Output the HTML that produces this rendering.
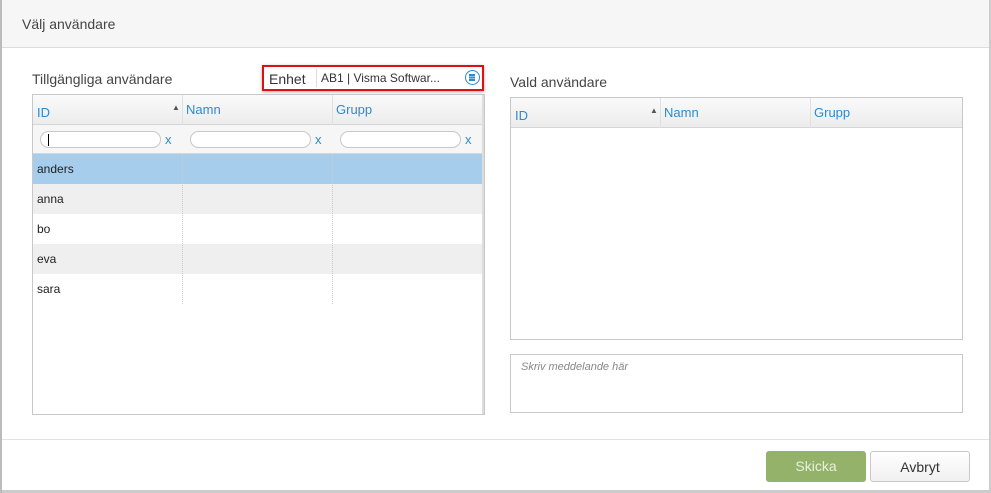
<!DOCTYPE html>
<html><head><meta charset="utf-8"><style>
*{box-sizing:border-box;margin:0;padding:0}
body{width:991px;height:493px;background:#fff;font-family:"Liberation Sans",sans-serif;position:relative;overflow:hidden;color:#333}
.a{position:absolute}
.hd{left:0;top:0;width:991px;height:48px;background:#f6f6f6;border-bottom:1px solid #ddd}
.grid{border:1px solid #c8c8c8;background:#fff}
.th{background:linear-gradient(#fafafa,#ececec);border-bottom:1px solid #d6d6d6;height:30px}
.th span{position:absolute;color:#2b8bd0;font-size:13px;top:9px}
.cell{font-size:12px;color:#222}
.fi{position:absolute;top:6px;height:17px;border:1px solid #c8c8c8;border-radius:9px;background:#fff}
.x{position:absolute;top:7px;color:#2b8bd0;font-size:13px}
.btn{border-radius:3px;font-size:14px;text-align:center;line-height:30px}
</style></head><body>
<div class="a" style="left:0;top:0;width:2px;height:493px;background:#bbb;z-index:5"></div>
<div class="a" style="left:989px;top:0;width:2px;height:493px;background:#ccc;z-index:5"></div>
<div class="a hd"><div class="a" style="left:22px;top:16px;font-size:14px;color:#444">Välj användare</div></div>

<div class="a" style="left:32px;top:71px;font-size:14px;color:#444">Tillgängliga användare</div>
<div class="a" style="left:262px;top:65px;width:222px;height:26px;border:2px solid #e01010;background:#fff;box-shadow:0 1px 3px #aaa">
 <div class="a" style="left:5px;top:4px;font-size:14px;color:#333">Enhet</div>
 <div class="a" style="left:52px;top:2px;width:1px;height:18px;background:#ddd"></div>
 <div class="a" style="left:57px;top:4px;font-size:12px;color:#333">AB1 | Visma Softwar...</div>
 <div class="a" style="left:201px;top:3px;width:15px;height:15px;border:1.5px solid #2b8bd0;border-radius:50%">
  <div class="a" style="left:3px;top:3px;width:6px;height:1.5px;background:#2b8bd0;box-shadow:0 2.5px #2b8bd0,0 5px #2b8bd0"></div></div>
</div>

<div class="a grid" style="left:32px;top:94px;width:453px;height:321px">
 <div class="a th" style="left:0;top:0;width:451px">
  <span style="left:4px;top:10px">ID</span><span style="left:139px;top:8px;color:#555;font-size:8px">▲</span>
  <span style="left:153px;top:7px">Namn</span><span style="left:303px;top:7px">Grupp</span>
  <div class="a" style="left:149px;top:0;width:1px;height:59px;background:#e0e0e0"></div>
  <div class="a" style="left:299px;top:0;width:1px;height:59px;background:#e0e0e0"></div>
 </div>
 <div class="a" style="left:0;top:30px;width:451px;height:29px;background:#f6f6f6;border-bottom:1px solid #d6d6d6">
  <div class="fi" style="left:7px;width:121px"><div class="a" style="left:7px;top:2px;width:1px;height:12px;background:#000"></div></div><div class="x" style="left:132px">x</div>
  <div class="fi" style="left:157px;width:121px"></div><div class="x" style="left:282px">x</div>
  <div class="fi" style="left:307px;width:121px"></div><div class="x" style="left:432px">x</div>
 </div>
 <div class="a" style="left:0;top:59px;width:449px;height:30px;background:#a6cdeb"></div>
 <div class="a" style="left:0;top:89px;width:449px;height:30px;background:#efefef"></div>
 <div class="a" style="left:0;top:149px;width:449px;height:30px;background:#efefef"></div>
 <div class="a" style="left:149px;top:59px;height:150px;border-left:1px dotted #ccc"></div>
 <div class="a" style="left:299px;top:59px;height:150px;border-left:1px dotted #ccc"></div>
 <div class="a" style="left:449px;top:0;width:2px;height:319px;background:#ddd"></div>
 <div class="a cell" style="left:4px;top:67px">anders</div>
 <div class="a cell" style="left:4px;top:97px">anna</div>
 <div class="a cell" style="left:4px;top:127px">bo</div>
 <div class="a cell" style="left:4px;top:157px">eva</div>
 <div class="a cell" style="left:4px;top:187px">sara</div>
</div>

<div class="a" style="left:510px;top:74px;font-size:14px;color:#444">Vald användare</div>
<div class="a grid" style="left:510px;top:97px;width:453px;height:243px">
 <div class="a th" style="left:0;top:0;width:451px">
  <span style="left:4px;top:10px">ID</span><span style="left:139px;top:8px;color:#555;font-size:8px">▲</span>
  <span style="left:153px;top:7px">Namn</span><span style="left:303px;top:7px">Grupp</span>
  <div class="a" style="left:149px;top:0;width:1px;height:30px;background:#e0e0e0"></div>
  <div class="a" style="left:299px;top:0;width:1px;height:30px;background:#e0e0e0"></div>
 </div>
</div>
<div class="a" style="left:510px;top:354px;width:453px;height:59px;border:1px solid #c8c8c8">
 <div class="a" style="left:10px;top:6px;font-size:11px;font-style:italic;color:#888">Skriv meddelande här</div>
</div>

<div class="a" style="left:0;top:439px;width:991px;height:1px;background:#e2e2e2"></div>
<div class="a btn" style="left:766px;top:451px;width:100px;height:31px;background:#94b26a;color:#e8f0dc">Skicka</div>
<div class="a btn" style="left:870px;top:451px;width:100px;height:31px;background:linear-gradient(#fff,#f0f0f0);border:1px solid #c8c8c8;color:#333">Avbryt</div>
<div class="a" style="left:0;top:490px;width:991px;height:3px;background:#ccc"></div>
</body></html>
